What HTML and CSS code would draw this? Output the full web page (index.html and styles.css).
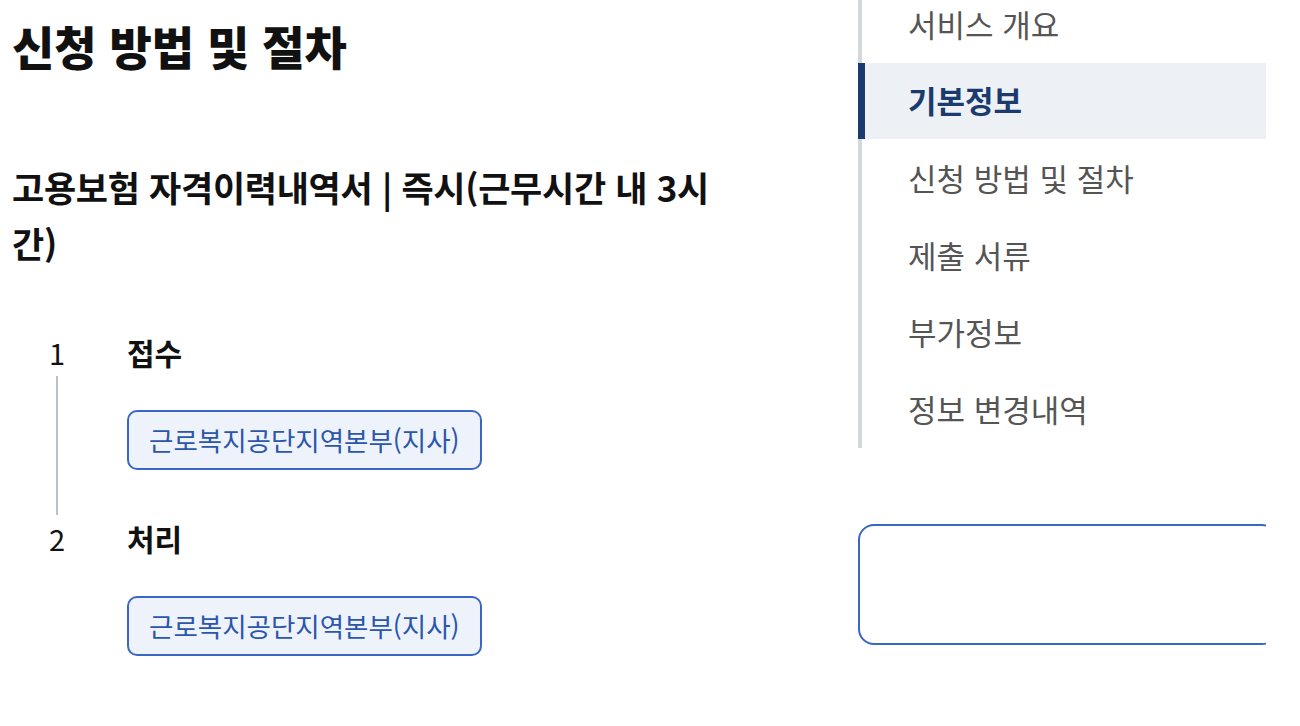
FILE: index.html
```html
<!DOCTYPE html>
<html lang="ko">
<head>
    <meta charset="UTF-8">
    <title>신청 방법 및 절차</title>
    <link rel="stylesheet" href="styles.css">
</head>
<body>
    <div class="page">
        <main class="main">
            <h2 class="title">신청 방법 및 절차</h2>
            <h3 class="sub-title">고용보험 자격이력내역서 | 즉시(근무시간 내 3시간)</h3>
            <ol class="steps">
                <li class="step">
                    <div class="step-num">
                        <span>1</span>
                        <i class="step-line"></i>
                    </div>
                    <div class="step-body">
                        <div class="step-name">접수</div>
                        <span class="badge">근로복지공단지역본부(지사)</span>
                    </div>
                </li>
                <li class="step">
                    <div class="step-num">
                        <span>2</span>
                    </div>
                    <div class="step-body">
                        <div class="step-name">처리</div>
                        <span class="badge">근로복지공단지역본부(지사)</span>
                    </div>
                </li>
            </ol>
        </main>
        <aside class="side">
            <ul class="side-nav">
                <li>서비스 개요</li>
                <li class="active">기본정보</li>
                <li>신청 방법 및 절차</li>
                <li>제출 서류</li>
                <li>부가정보</li>
                <li>정보 변경내역</li>
            </ul>
            <div class="side-box"></div>
        </aside>
    </div>
</body>
</html>
```

FILE: styles.css
```css
:root {
    --navy: #1b3a6d;
    --blue: #3a67c6;
    --blue-light: #eef3fb;
    --gray-line: #d4d7db;
}
body {
    margin: 0;
    background: #fff;
    font-family: "Noto Sans CJK KR", "Noto Sans", sans-serif;
    color: #111;
}
.page {
    display: flex;
    width: 1266px;
    height: 726px;
    overflow: hidden;
}
.main {
    width: 710px;
    padding-left: 12px;
    flex-shrink: 0;
}
.title {
    margin: 14px 0 0;
    font-size: 46px;
    line-height: 62px;
    font-weight: 900;
}
.sub-title {
    margin: 83px 0 0;
    font-size: 35px;
    line-height: 56px;
    font-weight: 700;
    letter-spacing: -0.3px;
}
.steps {
    list-style: none;
    margin: 61px 0 0;
    padding: 0;
}
.step {
    display: flex;
}
.step + .step {
    margin-top: 48px;
}
.step-num {
    width: 90px;
    display: flex;
    flex-direction: column;
    align-items: center;
    font-size: 29px;
    line-height: 40px;
    margin-right: 25px;
}
.step-line {
    flex: 1;
    width: 1.5px;
    margin: 4px 0 -45px;
    background: #bcc2ca;
}
.step-body {
    display: flex;
    flex-direction: column;
    align-items: flex-start;
}
.step-name {
    font-size: 30px;
    line-height: 40px;
    font-weight: 700;
}
.badge {
    margin-top: 38px;
    box-sizing: border-box;
    width: 355px;
    height: 60px;
    padding: 0 20px;
    border: 2px solid var(--blue);
    border-radius: 10px;
    background: var(--blue-light);
    color: #2c56aa;
    font-size: 26.5px;
    line-height: 56px;
}
.side {
    margin-left: 136px;
    width: 420px;
    flex-shrink: 0;
}
.side-nav {
    list-style: none;
    margin: -14px 0 0;
    padding: 0;
    border-left: 4px solid var(--gray-line);
}
.side-nav li {
    height: 77px;
    line-height: 75px;
    padding-left: 46px;
    font-size: 31px;
    color: #555;
}
.side-nav .active {
    margin-left: -4px;
    padding-left: 43px;
    border-left: 7px solid var(--navy);
    background: #edf1f6;
    color: var(--navy);
    font-weight: 700;
    height: 76px;
    line-height: 74px;
    margin-bottom: 1px;
}
.side-box {
    margin-top: 76px;
    height: 121px;
    box-sizing: border-box;
    border: 2px solid var(--blue);
    border-radius: 16px;
}
```
